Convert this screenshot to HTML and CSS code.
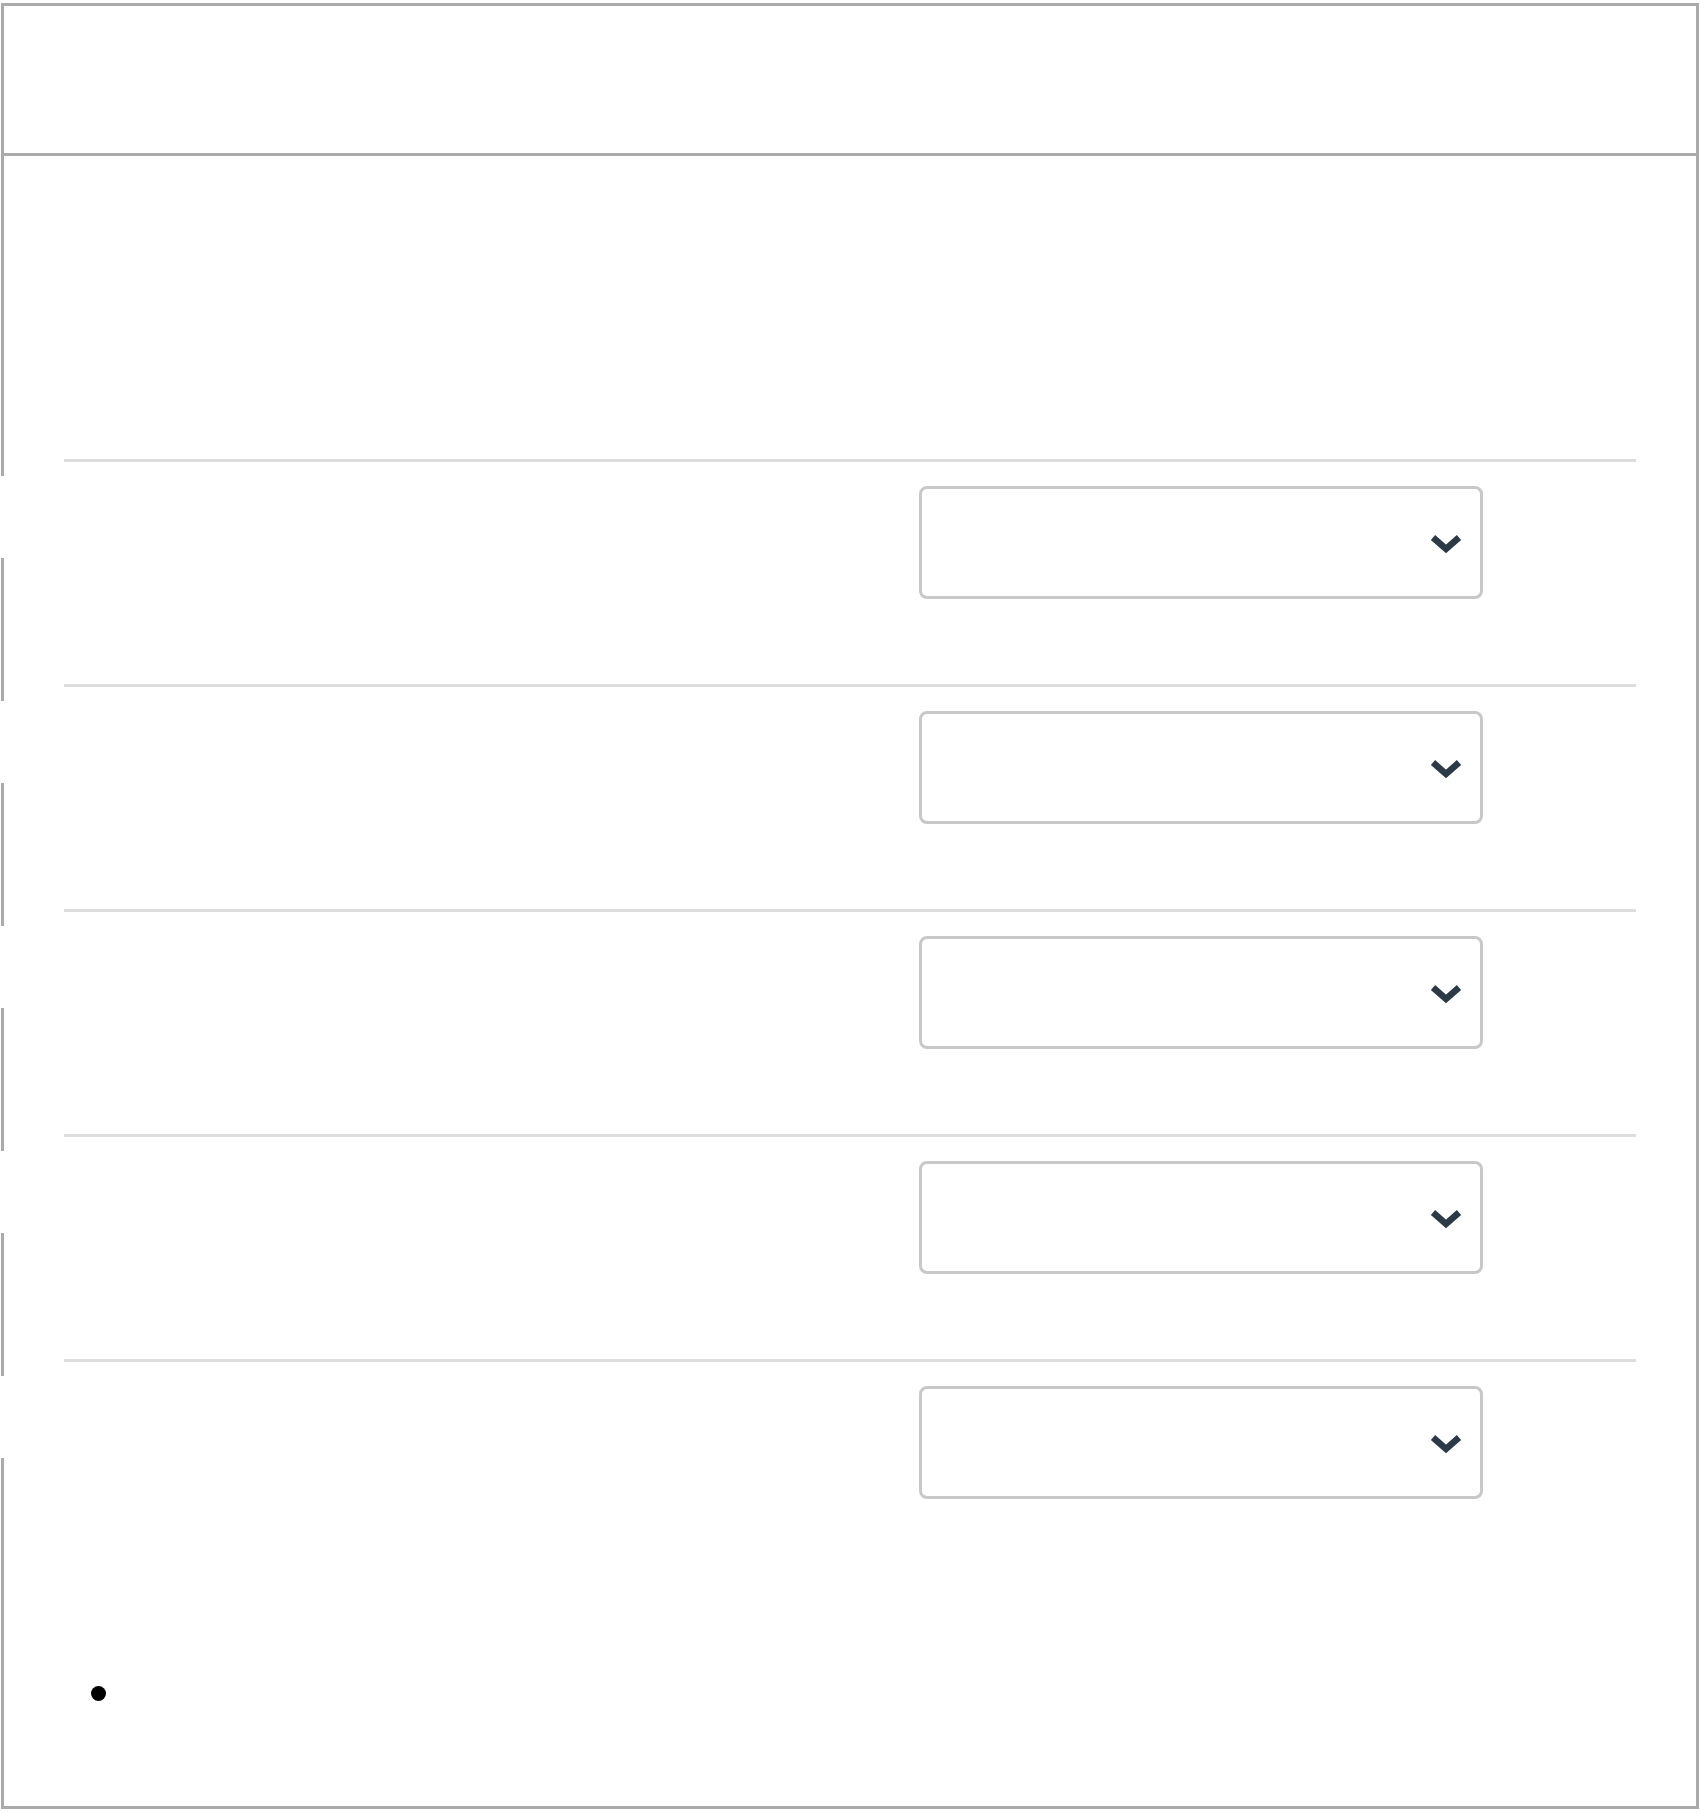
FILE: index.html
```html
<!DOCTYPE html>
<html lang="en">
<head>
    <meta charset="UTF-8">
    <meta name="viewport" content="width=device-width, initial-scale=1.0">
    <title>Settings</title>
    <link rel="stylesheet" href="styles.css">
</head>
<body>
<div class="frame">
    <div class="header"></div>
    <div class="content">
        <div class="rows">
            <div class="row">
                <div class="row-label"></div>
                <div class="select">
                    <svg class="chevron" width="32" height="20" viewBox="0 0 32 20"><polyline points="3,3.5 16,15 29,3.5"/></svg>
                </div>
            </div>
            <div class="row">
                <div class="row-label"></div>
                <div class="select">
                    <svg class="chevron" width="32" height="20" viewBox="0 0 32 20"><polyline points="3,3.5 16,15 29,3.5"/></svg>
                </div>
            </div>
            <div class="row">
                <div class="row-label"></div>
                <div class="select">
                    <svg class="chevron" width="32" height="20" viewBox="0 0 32 20"><polyline points="3,3.5 16,15 29,3.5"/></svg>
                </div>
            </div>
            <div class="row">
                <div class="row-label"></div>
                <div class="select">
                    <svg class="chevron" width="32" height="20" viewBox="0 0 32 20"><polyline points="3,3.5 16,15 29,3.5"/></svg>
                </div>
            </div>
            <div class="row">
                <div class="row-label"></div>
                <div class="select">
                    <svg class="chevron" width="32" height="20" viewBox="0 0 32 20"><polyline points="3,3.5 16,15 29,3.5"/></svg>
                </div>
            </div>
        </div>
        <ul class="notes">
            <li></li>
        </ul>
    </div>
</div>
</body>
</html>
```

FILE: styles.css
```css
html, body {
    margin: 0;
    padding: 0;
    background-color: #fff;
}

body {
    font-family: 'Liberation Sans', Arial, sans-serif;
    color: #000;
    padding: 3px 1px;
}

.frame {
    border: 3px solid #aaa;
    height: 1800px;
}

.header {
    height: 147px;
    border-bottom: 3px solid #aaa;
}

.content {
    padding: 303px 60px 0 60px;
}

.row {
    display: flex;
    align-items: flex-start;
    border-top: 3px solid #ddd;
    padding-bottom: 85px;
}

.row-label {
    flex: none;
    width: 919px;
    height: 82px;
    margin: 14px 0 0 -64px;
    background-color: #fff;
}

.select {
    flex: none;
    box-sizing: border-box;
    width: 564px;
    height: 113px;
    margin-top: 24px;
    border: 3px solid #c8c8c8;
    border-radius: 8px;
    display: flex;
    align-items: center;
    justify-content: flex-end;
    padding: 2px 18px 0 0;
}

.chevron polyline {
    fill: none;
    stroke: #2c3a47;
    stroke-width: 6.5;
    stroke-linecap: butt;
    stroke-linejoin: miter;
}

.notes {
    list-style: none;
    margin: 102px 0 0 0;
    padding: 0 0 0 27px;
}

.notes li::before {
    content: "";
    display: block;
    width: 15px;
    height: 15px;
    border-radius: 50%;
    background-color: #000;
}
```
